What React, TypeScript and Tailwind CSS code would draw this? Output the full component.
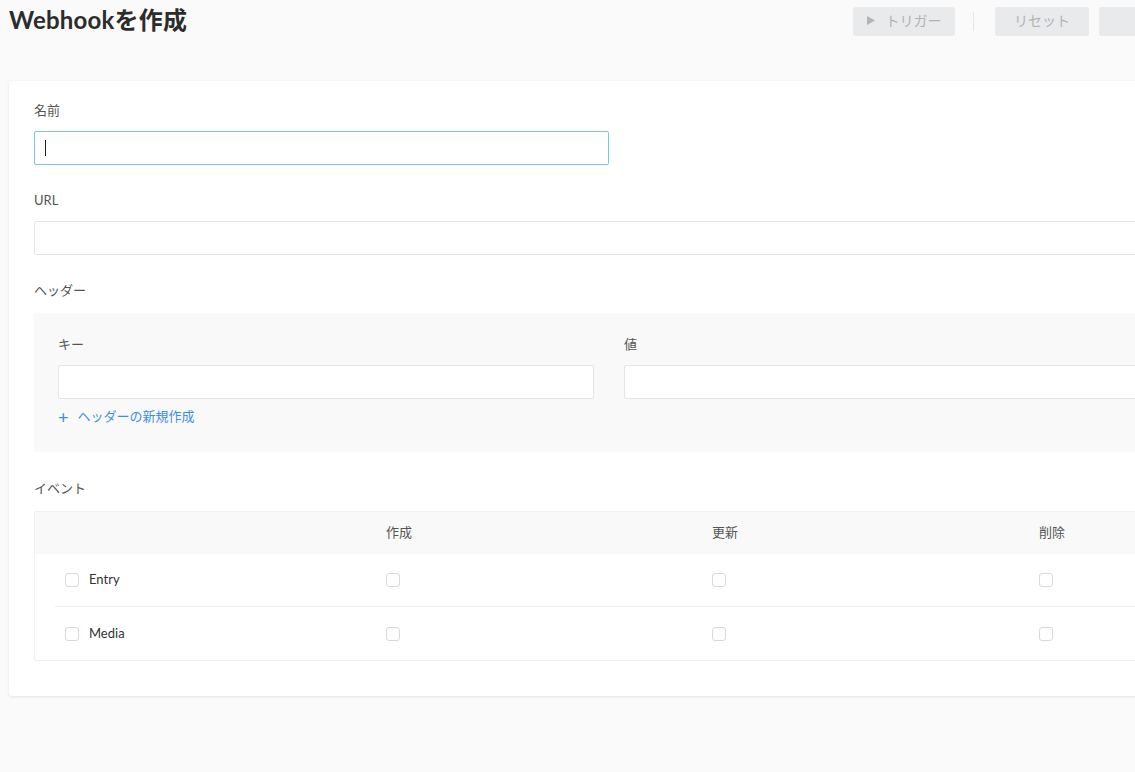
import React from 'react'

const FONT = { fontFamily: 'Lato, "Noto Sans CJK JP", "Noto Sans", sans-serif' }

const EVENT_ROWS = ['Entry', 'Media']
const EVENT_COLUMNS = ['作成', '更新', '削除']

function Label({ children, className = '' }: { children: React.ReactNode; className?: string }) {
  return (
    <div className={`h-5 flex items-center text-[13px] text-[#555] ${className}`}>{children}</div>
  )
}

function TextInput({ className = '' }: { className?: string }) {
  return (
    <input
      readOnly
      className={`block h-[34px] border border-[#e2e5ea] rounded-[2px] bg-white px-2.5 text-[13px] outline-none ${className}`}
    />
  )
}

function Checkbox() {
  return <span className="inline-block w-[14px] h-[14px] rounded-[3px] border border-[#d9d9d9] bg-white" />
}

export default function App() {
  return (
    <div className="min-h-screen w-full overflow-hidden bg-[#fafafa]" style={FONT}>
      <div className="w-[1260px] pl-[9px]">
        {/* Header */}
        <div className="flex items-center w-[1200px] pt-[7px]">
          <h1 className="mb-[4px] text-[24px] leading-none font-bold text-[#2c2c2c] tracking-[0.2px]">
            Webhookを作成
          </h1>
          <div className="ml-auto flex items-center">
            <button className="h-[29px] w-[102px] rounded-[3px] bg-[#e9eaeb] text-[14px] text-[#b3b3b3] flex items-center justify-center gap-[11px] pb-[3px]">
              <svg width="8" height="9" viewBox="0 0 8 9" className="fill-[#b3b3b3]">
                <path d="M0 0 L8 4.5 L0 9 Z" />
              </svg>
              <span>トリガー</span>
            </button>
            <div className="ml-[18px] mr-[21px] w-px h-[19px] bg-[#e4e4e4]" />
            <button className="h-[29px] w-[94px] rounded-[3px] bg-[#e9eaeb] text-[14px] text-[#b3b3b3] pb-[3px]">
              リセット
            </button>
            <button className="ml-[10px] h-[29px] w-[110px] rounded-[3px] bg-[#e9eaeb]" aria-label="保存" />
          </div>
        </div>

        {/* Card */}
        <div className="mt-[45px] w-[1200px] bg-white rounded-[3px] shadow-[0_1px_3px_rgba(180,190,210,0.35)] px-[25px] pt-5 pb-[35px]">
          <Label>名前</Label>
          <div className="mt-2.5 h-[34px] w-[575px] border border-[#79c3f2] rounded-[2px] bg-white flex items-center pl-[10px]">
            <span className="w-px h-4 bg-[#222]" />
          </div>

          <Label className="mt-[26px]">URL</Label>
          <TextInput className="mt-2.5 w-full" />

          <Label className="mt-[26px]">ヘッダー</Label>
          <div className="mt-3 bg-[#f9f9f9] rounded-[2px] px-6 pt-[22px] pb-[25px]">
            <div className="grid grid-cols-2 gap-[30px]">
              <div>
                <Label>キー</Label>
                <TextInput className="mt-2.5 w-full" />
              </div>
              <div>
                <Label>値</Label>
                <TextInput className="mt-2.5 w-full" />
              </div>
            </div>
            <button className="mt-[8px] h-5 flex items-center gap-[9px] text-[13px] text-[#3b8fe6]">
              <span className="text-[18px] leading-none">+</span>
              <span>ヘッダーの新規作成</span>
            </button>
          </div>

          <Label className="mt-[27px]">イベント</Label>
          <div className="mt-3 border border-[#efefef] rounded-[2px]">
            <div className="grid grid-cols-[351px_326px_327px_1fr] h-[42px] items-center bg-[#f9f9f9] text-[13px] text-[#555]">
              <div />
              {EVENT_COLUMNS.map((c) => (
                <div key={c}>{c}</div>
              ))}
            </div>
            {EVENT_ROWS.map((row, i) => (
              <div
                key={row}
                className={`ml-5 grid grid-cols-[331px_326px_327px_1fr] h-[53px] items-center ${
                  i < EVENT_ROWS.length - 1 ? 'border-b border-[#efefef]' : ''
                }`}
              >
                <div className="flex items-center gap-[10px] pl-[10px]">
                  <Checkbox />
                  <span className="text-[13px] text-[#333]">{row}</span>
                </div>
                {EVENT_COLUMNS.map((c) => (
                  <div key={c} className="flex items-center">
                    <Checkbox />
                  </div>
                ))}
              </div>
            ))}
          </div>
        </div>
      </div>
    </div>
  )
}
